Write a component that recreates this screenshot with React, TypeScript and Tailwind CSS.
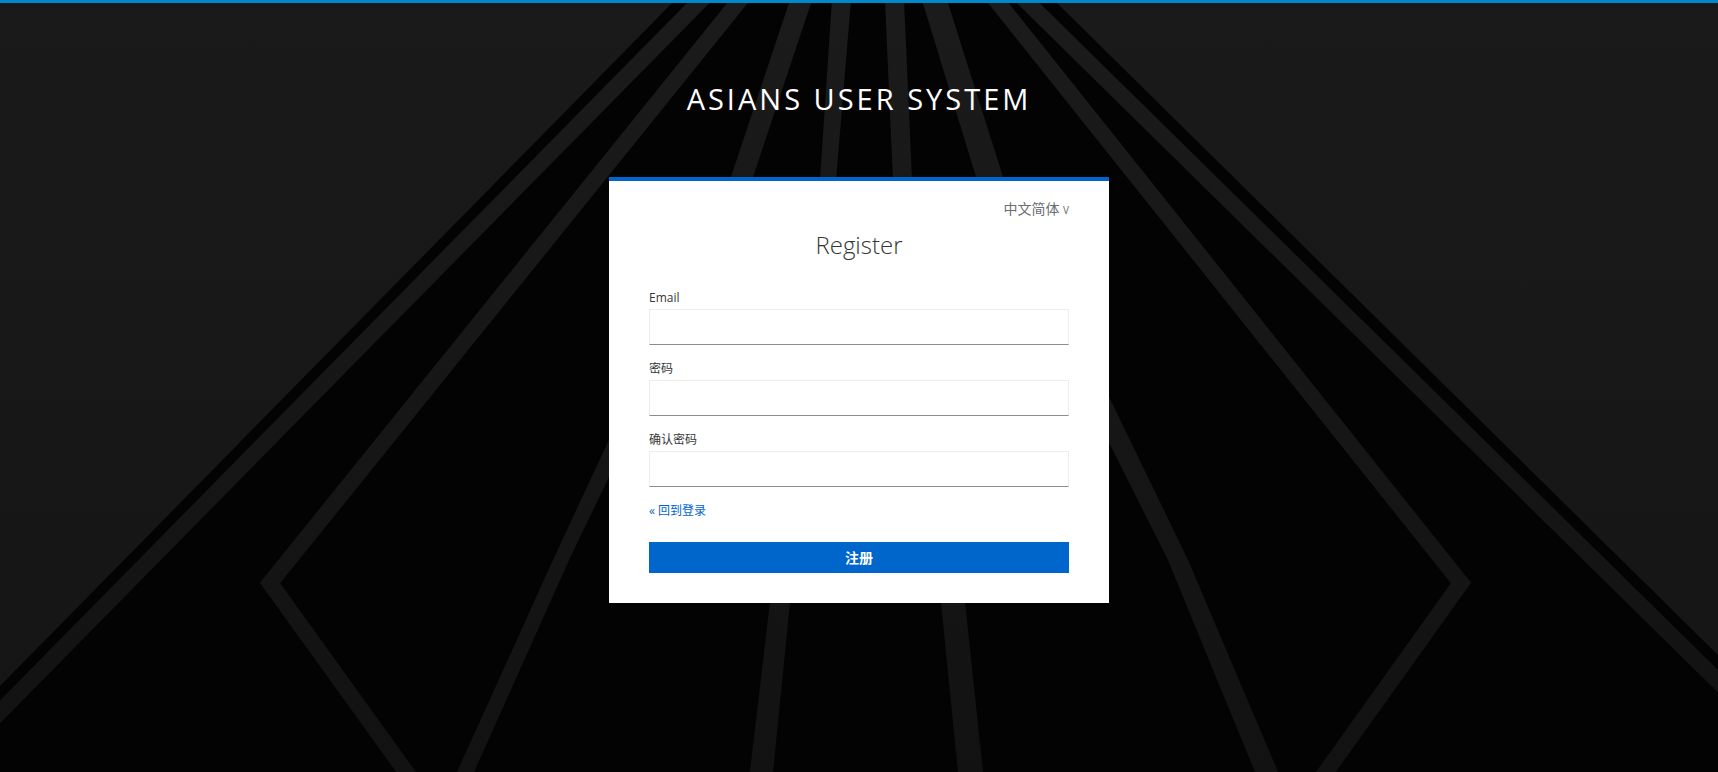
import React from 'react';

const bands: string[] = [
  // radial left
  '790,0 812,0 752,180 569,560 474,772 457,772 553,560 730,180',
  // near vertical left
  '832,0 851,0 836,180 790,602 773,772 750,772 770,602 820,180',
  // near vertical right
  '885,0 904,0 912,180 965,602 983,772 958,772 941,602 893,180',
  // radial right
  '922,0 947,0 1004,180 1188,560 1278,772 1255,772 1168,560 977,180',
];

const Background = () => (
  <svg
    className="absolute inset-0 h-full w-full"
    viewBox="0 0 1718 772"
    preserveAspectRatio="none"
  >
    <defs>
      <linearGradient id="band" x1="0" y1="0" x2="0" y2="772" gradientUnits="userSpaceOnUse">
        <stop offset="0" stopColor="#1b1b1b" />
        <stop offset="1" stopColor="#121212" />
      </linearGradient>
      <linearGradient id="side" x1="0" y1="0" x2="0" y2="772" gradientUnits="userSpaceOnUse">
        <stop offset="0" stopColor="#1a1a1a" />
        <stop offset="1" stopColor="#151515" />
      </linearGradient>
    </defs>
    <polygon points="0,0 675,0 0,686" fill="url(#side)" />
    <polygon points="1054,0 1718,0 1718,655" fill="url(#side)" />
    <line x1="711" y1="-10" x2="-10" y2="722" stroke="url(#band)" strokeWidth="16" />
    <line x1="1015" y1="-10" x2="1728" y2="691" stroke="url(#band)" strokeWidth="16" />
    <polyline
      points="748,-10 270,583 414,783"
      fill="none"
      stroke="url(#band)"
      strokeWidth="16"
      strokeLinejoin="miter"
    />
    <polyline
      points="988,-10 1461,583 1318,783"
      fill="none"
      stroke="url(#band)"
      strokeWidth="16"
      strokeLinejoin="miter"
    />
    {bands.map((p, i) => (
      <polygon key={i} points={p} fill="url(#band)" />
    ))}
  </svg>
);

const Field = ({ label, type, first }: { label: string; type: string; first?: boolean }) => (
  <div className={first ? 'mt-[31px]' : 'mt-[15px]'}>
    <label className="block text-xs leading-[18px] text-[#363636] mb-[2px]">{label}</label>
    <input
      type={type}
      className="block h-9 w-full border border-[#ededed] border-b-[#8a8d90] bg-white px-2 text-sm outline-none"
    />
  </div>
);

const App = () => {
  return (
    <div className="relative min-h-screen w-full overflow-hidden bg-[#030303] font-['Open_Sans','Noto_Sans_CJK_SC',sans-serif]">
      <Background />
      <div className="relative h-[3px] w-full bg-[#0088ce]" />
      <div className="relative flex flex-col items-center">
        <h1 className="pt-[78px] text-center text-[29px] leading-[35px] tracking-[3px] text-white">
          ASIANS USER SYSTEM
        </h1>
        <div className="mt-[61px] w-[500px] border-t-4 border-[#0066cc] bg-white px-10 pt-[18px] pb-[30px]">
          <div className="flex justify-end">
            <span className="text-sm leading-5 text-[#6a6e73]">
              中文简体 <span className="text-[10px]">V</span>
            </span>
          </div>
          <h2 className="mt-3 text-center text-2xl leading-[26px] font-light text-[#363636]">
            Register
          </h2>
          <form onSubmit={(e) => e.preventDefault()}>
            <Field label="Email" type="text" first />
            <Field label="密码" type="password" />
            <Field label="确认密码" type="password" />
            <div className="mt-[15px] text-xs leading-[18px]">
              <a href="#" className="text-[#0066cc]">
                « 回到登录
              </a>
            </div>
            <button
              type="submit"
              className="mt-[22px] block h-[31px] w-full bg-[#0066cc] text-sm font-semibold text-white"
            >
              注册
            </button>
          </form>
        </div>
      </div>
    </div>
  );
};

export default App;
